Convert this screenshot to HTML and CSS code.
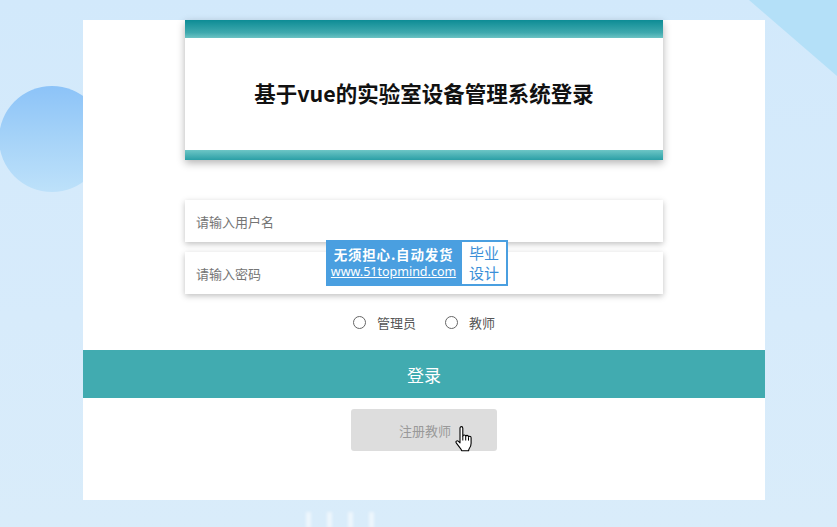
FILE: index.html
```html
<!DOCTYPE html>
<html lang="zh">
<head>
    <meta charset="UTF-8">
    <meta name="viewport" content="width=device-width, initial-scale=1.0">
    <title>实验室设备管理系统登录</title>
    <link rel="stylesheet" href="styles.css">
</head>
<body>
    <div class="bg-circle"></div>
    <div class="bg-corner"></div>
    <div class="bg-bars">
        <span></span><span></span><span></span><span></span>
    </div>

    <div class="card">
        <div class="title-box">
            <div class="title-top"></div>
            <h2>基于vue的实验室设备管理系统登录</h2>
            <div class="title-bottom"></div>
        </div>

        <div class="form">
            <input type="text" class="field" placeholder="请输入用户名">
            <input type="password" class="field" placeholder="请输入密码">

            <div class="roles">
                <label class="role"><span class="radio"></span>管理员</label>
                <label class="role"><span class="radio"></span>教师</label>
            </div>
        </div>

        <button class="login-btn">登录</button>
        <div class="register-row">
            <button class="register-btn">注册教师</button>
        </div>
    </div>

    <!-- 水印 -->
    <div class="watermark">
        <div class="wm-left">
            <div class="wm-line1">无须担心.自动发货</div>
            <div class="wm-line2">www.51topmind.com</div>
        </div>
        <div class="wm-right">毕业<br>设计</div>
    </div>

    <svg class="cursor" width="18" height="26" viewBox="0 0 18 26">
        <path d="M5 2.2c0-1 .6-1.6 1.4-1.6S7.8 1.2 7.8 2.2V10c.3-.7.9-1 1.5-1 .8 0 1.3.5 1.4 1.3.3-.6.8-.9 1.4-.9.8 0 1.3.6 1.4 1.4.3-.4.7-.6 1.2-.6.8 0 1.4.7 1.4 1.6v5.4c0 2.5-.8 4-1.8 5.3-.5.7-.7 1.300-.7 2.3H6.6c-.1-1-.6-1.7-1.4-2.6L1.4 17.2c-.6-.7-.6-1.6 0-2.1.6-.5 1.5-.4 2.1.2L5 16.8V2.2z" fill="#fff" stroke="#000" stroke-width="1.1" stroke-linejoin="round"/>
        <path d="M7.8 10v4.5M10.7 10.3v4.2M13.5 11.2v3.4" stroke="#000" stroke-width="1" fill="none"/>
    </svg>
</body>
</html>
```

FILE: styles.css
```css
body {
    margin: 0;
    height: 527px;
    overflow: hidden;
    font-family: "Noto Sans CJK SC", "Noto Sans", sans-serif;
    background: linear-gradient(180deg, #d2e9fb 0%, #d7ebfb 60%, #d9ecfa 100%);
    position: relative;
}
.bg-circle {
    position: absolute;
    left: -1px;
    top: 86px;
    width: 106px;
    height: 106px;
    border-radius: 50%;
    background: linear-gradient(180deg, #8cc3f8 0%, #a6d3f8 50%, #bde1fa 100%);
}
.bg-corner {
    position: absolute;
    right: 0;
    top: 0;
    width: 88px;
    height: 76px;
    background: #b4e0f8;
    clip-path: polygon(0 0, 100% 0, 100% 100%);
}
.bg-bars {
    position: absolute;
    left: 306px;
    top: 512px;
    display: flex;
    gap: 16px;
    filter: blur(1.5px);
}
.bg-bars span {
    width: 5px;
    height: 16px;
    background: rgba(255, 255, 255, 0.55);
}
.card {
    position: relative;
    width: 682px;
    height: 480px;
    margin: 20px 0 0 83px;
    background: #ffffff;
}
.title-box {
    width: 478px;
    height: 140px;
    margin: 0 auto;
    display: flex;
    flex-direction: column;
    background: #fff;
    box-shadow: 0 3px 8px rgba(0, 0, 0, 0.3);
}
.title-top {
    height: 18px;
    background: linear-gradient(180deg, #0d8c95 0%, #3fa9ae 70%, #6cc3c4 100%);
}
.title-bottom {
    height: 10px;
    background: linear-gradient(180deg, #6dc6c6 0%, #2b9fa6 100%);
}
.title-box h2 {
    flex: 1;
    margin: 0;
    display: flex;
    align-items: center;
    justify-content: center;
    font-size: 21.5px;
    font-weight: bold;
    color: #111;
    padding-bottom: 4px;
}
.form {
    width: 478px;
    margin: 40px auto 0;
    display: flex;
    flex-direction: column;
    gap: 10px;
}
.field {
    height: 42px;
    box-sizing: border-box;
    border: none;
    outline: none;
    padding: 0 11px;
    font-family: inherit;
    font-size: 13px;
    background: #fff;
    box-shadow: 0 2px 6px rgba(0, 0, 0, 0.25);
}
.field::placeholder {
    color: #757575;
}
.roles {
    display: flex;
    justify-content: center;
    gap: 29px;
    margin-top: 10px;
    height: 36px;
}
.role {
    display: flex;
    align-items: center;
    gap: 11px;
    height: 16px;
    font-size: 13px;
    color: #555;
}
.radio {
    width: 11px;
    height: 11px;
    border: 1px solid #666;
    border-radius: 50%;
}
.login-btn {
    display: block;
    width: 100%;
    height: 48px;
    margin-top: 0;
    border: none;
    background: #41abb0;
    color: #fff;
    font-family: inherit;
    font-size: 17px;
    cursor: pointer;
}
.register-row {
    display: flex;
    justify-content: center;
    padding-top: 11px;
}
.register-btn {
    width: 146px;
    height: 42px;
    border: none;
    border-radius: 3px;
    background: #dddddd;
    color: #999;
    font-family: inherit;
    font-size: 13px;
    padding-right: 4px;
}
.watermark {
    position: absolute;
    left: 326px;
    top: 240px;
    height: 46px;
    display: flex;
    background: #4a9fe0;
}
.wm-left {
    width: 135px;
    color: #fff;
    text-align: center;
    padding-top: 5px;
    box-sizing: border-box;
}
.wm-line1 {
    font-size: 13.5px;
    font-weight: bold;
    line-height: 18px;
    letter-spacing: 0.8px;
}
.wm-line2 {
    font-family: "Noto Sans", sans-serif;
    font-size: 12.5px;
    line-height: 18px;
    text-decoration: underline;
}
.wm-right {
    width: 44px;
    margin: 2px 2px 2px 1px;
    background: #fff;
    color: #3c8fd8;
    font-size: 15px;
    line-height: 20px;
    text-align: center;
    padding-top: 1px;
    box-sizing: border-box;
}
.cursor {
    position: absolute;
    left: 455px;
    top: 426px;
}
```
